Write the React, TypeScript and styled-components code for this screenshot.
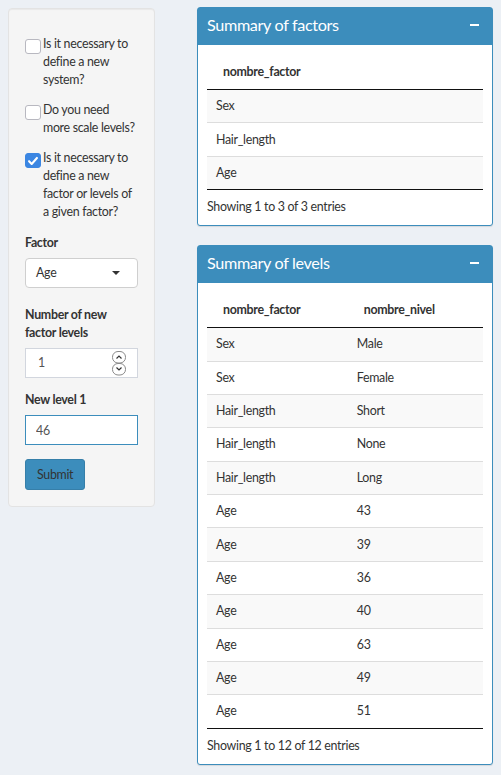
import React from "react";
import styled, { createGlobalStyle } from "styled-components";

const GlobalStyle = createGlobalStyle`
  html, body {
    margin: 0;
    padding: 0;
    background: #ecf0f5;
  }
  body {
    font-family: "Lato", "Liberation Sans", sans-serif;
    font-size: 12.4px;
    letter-spacing: -0.3px;
    line-height: 18px;
    color: #333;
  }
  * {
    box-sizing: border-box;
  }
`;

const factors = ["Sex", "Hair_length", "Age"];

const levels: [string, string][] = [
  ["Sex", "Male"],
  ["Sex", "Female"],
  ["Hair_length", "Short"],
  ["Hair_length", "None"],
  ["Hair_length", "Long"],
  ["Age", "43"],
  ["Age", "39"],
  ["Age", "36"],
  ["Age", "40"],
  ["Age", "63"],
  ["Age", "49"],
  ["Age", "51"],
];

const Page = styled.div`
  display: flex;
  align-items: flex-start;
  gap: 42px;
  padding: 7px 8px 0 8px;
  min-height: 775px;
`;

const Sidebar = styled.form`
  width: 147px;
  flex-shrink: 0;
  margin-top: 1px;
  padding: 26px 16px 16px;
  background: #f5f5f5;
  border: 1px solid #e3e3e3;
  border-radius: 4px;
  box-shadow: inset 0 1px 1px rgba(0, 0, 0, 0.05);
  display: flex;
  flex-direction: column;
`;

const CheckRow = styled.label<{ $last?: boolean }>`
  display: flex;
  align-items: flex-start;
  gap: 2px;
  margin-bottom: ${(p) => (p.$last ? "13px" : "12px")};
  cursor: pointer;
`;

const CheckBox = styled.input`
  appearance: none;
  flex-shrink: 0;
  width: 16px;
  height: 15px;
  margin: 4px 0 0 0;
  background: #fff;
  border: 1px solid #b8b8c0;
  border-radius: 3px;

  &:checked {
    background: #3b86e2
      url("data:image/svg+xml,%3Csvg xmlns='http://www.w3.org/2000/svg' viewBox='0 0 16 16'%3E%3Cpath d='M3.5 8.5l3 3 6-6.5' fill='none' stroke='white' stroke-width='2.4' stroke-linecap='round' stroke-linejoin='round'/%3E%3C/svg%3E")
      center / 14px 14px no-repeat;
    border-color: #3b86e2;
  }
`;

const CheckText = styled.span`
  width: 94px;
`;

const Field = styled.div<{ $space: number }>`
  display: flex;
  flex-direction: column;
  gap: 6px;
  margin-bottom: ${(p) => p.$space}px;
`;

const Label = styled.label`
  font-weight: 700;
`;

const Select = styled.div`
  height: 30px;
  display: flex;
  align-items: center;
  justify-content: space-between;
  padding: 0 17px 0 10px;
  background: #fff;
  border: 1px solid #cfcfcf;
  border-radius: 4px;
`;

const Caret = styled.span`
  width: 0;
  height: 0;
  border-left: 4px solid transparent;
  border-right: 4px solid transparent;
  border-top: 4px solid #333;
`;

const NumberBox = styled.div`
  height: 30px;
  display: flex;
  align-items: center;
  justify-content: space-between;
  padding: 0 10px 0 12px;
  background: #fff;
  border: 1px solid #d2d6de;
  color: #555;
`;

const TextInput = styled.input`
  height: 30px;
  width: 100%;
  padding: 0 10px;
  font: inherit;
  letter-spacing: inherit;
  color: #555;
  background: #fff;
  border: 1px solid #3c8dbc;
  border-radius: 0;
  outline: none;
`;

const SubmitButton = styled.button`
  align-self: flex-start;
  height: 31px;
  padding: 0 11px;
  font: inherit;
  letter-spacing: inherit;
  color: #333;
  background: #3c8dbc;
  border: 1px solid #367fa9;
  border-radius: 3px;
`;

const Main = styled.div`
  width: 297px;
  display: flex;
  flex-direction: column;
`;

const Box = styled.section`
  background: #fff;
  border: 1px solid #3c8dbc;
  border-radius: 3px;
  box-shadow: 0 1px 1px rgba(0, 0, 0, 0.1);
  margin-bottom: 19px;
`;

const BoxHeader = styled.header`
  height: 37px;
  display: flex;
  align-items: center;
  justify-content: space-between;
  padding: 0 13px 0 9px;
  background: #3c8dbc;
  color: #fff;
`;

const BoxTitle = styled.h3`
  margin: 0 0 4px 0;
  font-size: 16.2px;
  font-weight: 400;
  letter-spacing: -0.35px;
  line-height: 18px;
`;

const Minus = styled.span`
  width: 9px;
  height: 2.5px;
  margin-bottom: 3px;
  background: #fff;
`;

const BoxBody = styled.div`
  padding: 9px;
`;

const Table = styled.table`
  width: 100%;
  border-collapse: collapse;
  border-bottom: 1px solid #111;
`;

const Th = styled.th<{ $width?: string }>`
  width: ${(p) => p.$width ?? "auto"};
  padding: 8.5px 16px;
  text-align: left;
  font-weight: 700;
  border-bottom: 1px solid #111;
`;

const Row = styled.tr`
  &:nth-child(odd) {
    background: #f9f9f9;
  }
`;

const Td = styled.td`
  padding: 7.2px 9px;
  border-top: 1px solid #ddd;
`;

const Info = styled.div`
  padding-top: 8px;
`;

const Spinner = () => (
  <svg width="15" height="25" viewBox="0 0 15 25">
    <rect x="0.5" y="0.5" width="13" height="11.5" rx="5.5" fill="#fff" stroke="#8a8a8a" />
    <rect x="0.5" y="12.5" width="13" height="11.5" rx="5.5" fill="#fff" stroke="#8a8a8a" />
    <path d="M4.5 7.5l2.5-2.5 2.5 2.5" fill="none" stroke="#333" strokeWidth="1.2" />
    <path d="M4.5 16.5l2.5 2.5 2.5-2.5" fill="none" stroke="#333" strokeWidth="1.2" />
  </svg>
);

export default function App() {
  return (
    <>
      <GlobalStyle />
      <Page>
        <Sidebar onSubmit={(e) => e.preventDefault()}>
          <CheckRow>
            <CheckBox type="checkbox" />
            <CheckText>Is it necessary to define a new system?</CheckText>
          </CheckRow>
          <CheckRow>
            <CheckBox type="checkbox" />
            <CheckText>Do you need more scale levels?</CheckText>
          </CheckRow>
          <CheckRow $last>
            <CheckBox type="checkbox" defaultChecked />
            <CheckText>Is it necessary to define a new factor or levels of a given factor?</CheckText>
          </CheckRow>

          <Field $space={18}>
            <Label>Factor</Label>
            <Select>
              <span>Age</span>
              <Caret />
            </Select>
          </Field>

          <Field $space={13}>
            <Label>Number of new factor levels</Label>
            <NumberBox>
              <span>1</span>
              <Spinner />
            </NumberBox>
          </Field>

          <Field $space={14}>
            <Label>New level 1</Label>
            <TextInput defaultValue="46" />
          </Field>

          <SubmitButton type="submit">Submit</SubmitButton>
        </Sidebar>

        <Main>
          <Box>
            <BoxHeader>
              <BoxTitle>Summary of factors</BoxTitle>
              <Minus />
            </BoxHeader>
            <BoxBody>
              <Table>
                <thead>
                  <tr>
                    <Th>nombre_factor</Th>
                  </tr>
                </thead>
                <tbody>
                  {factors.map((f) => (
                    <Row key={f}>
                      <Td>{f}</Td>
                    </Row>
                  ))}
                </tbody>
              </Table>
              <Info>Showing 1 to 3 of 3 entries</Info>
            </BoxBody>
          </Box>

          <Box>
            <BoxHeader>
              <BoxTitle>Summary of levels</BoxTitle>
              <Minus />
            </BoxHeader>
            <BoxBody>
              <Table>
                <thead>
                  <tr>
                    <Th $width="51%">nombre_factor</Th>
                    <Th>nombre_nivel</Th>
                  </tr>
                </thead>
                <tbody>
                  {levels.map(([f, n], i) => (
                    <Row key={i}>
                      <Td>{f}</Td>
                      <Td>{n}</Td>
                    </Row>
                  ))}
                </tbody>
              </Table>
              <Info>Showing 1 to 12 of 12 entries</Info>
            </BoxBody>
          </Box>
        </Main>
      </Page>
    </>
  );
}
